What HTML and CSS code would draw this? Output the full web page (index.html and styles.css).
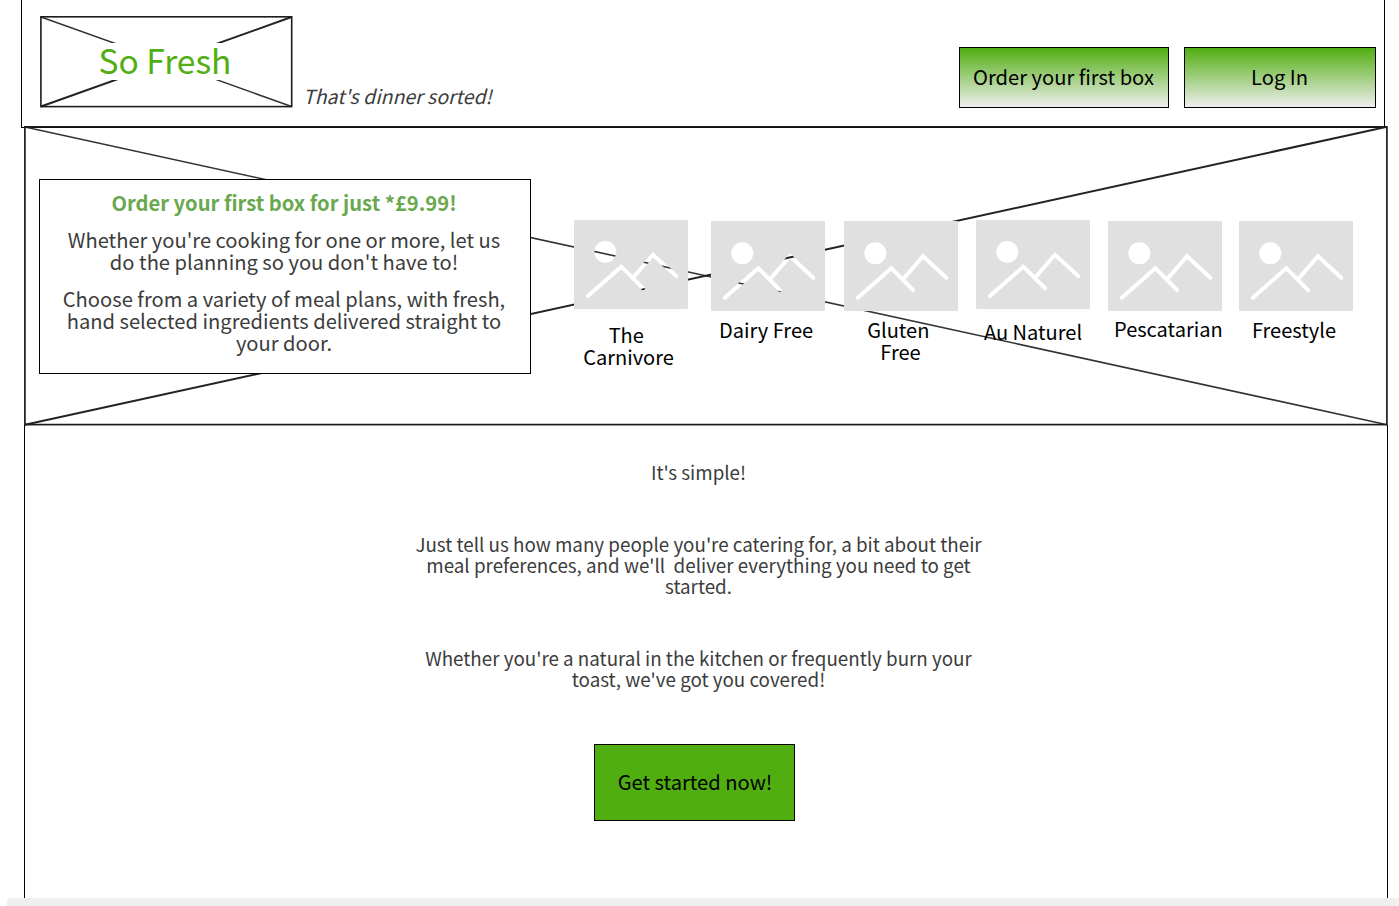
FILE: index.html
```html
<!DOCTYPE html>
<html lang="en">
<head>
<meta charset="utf-8">
<title>So Fresh</title>
<link rel="stylesheet" href="styles.css">
</head>
<body>
<svg class="defs" width="0" height="0" aria-hidden="true">
  <defs>
    <mask id="cutout" maskUnits="userSpaceOnUse" x="0" y="0" width="114" height="91">
      <rect width="114" height="91" rx="2" fill="#fff"/>
      <circle cx="31.3" cy="32.7" r="11" fill="#000"/>
      <path d="M13.8 77.3 47.3 47.7 69 69.5M59.8 57.9 79 35.7l23.3 21.6" fill="none" stroke="#000" stroke-width="4" stroke-linecap="round" stroke-linejoin="miter"/>
    </mask>
    <symbol id="picture" viewBox="0 -.5 114 92" preserveAspectRatio="none">
      <rect width="114" height="91" fill="#e0e0e0" mask="url(#cutout)"/>
    </symbol>
  </defs>
</svg>
<header class="header">
  <div class="logo">
    <svg class="cross" viewBox="0 0 253 92" aria-hidden="true">
      <path d="M1 1 251.5 90.5" stroke="#333" stroke-width="1.5"/>
      <path d="M1 90.5 251.5 1" stroke="#222" stroke-width="1.9"/>
      <rect x=".9" y=".8" width="250.8" height="89.8" fill="none" stroke="#1c1c1c" stroke-width="1.6"/>
    </svg>
    <h1 class="logo-text">So Fresh</h1>
  </div>
  <p class="tagline">That's dinner sorted!</p>
  <nav class="nav">
    <button class="button button-order">Order your first box</button>
    <button class="button button-login">Log In</button>
  </nav>
</header>
<section class="hero">
  <svg class="cross" viewBox="0 0 1364 300" aria-hidden="true">
    <path d="M1 1 1363 298.7" stroke="#333" stroke-width="1.6"/>
    <path d="M1 298.7 1363 .8" stroke="#222" stroke-width="2"/>
    <rect x=".9" y=".8" width="1362" height="297.8" fill="none" stroke="#1c1c1c" stroke-width="1.7"/>
  </svg>
  <div class="promo">
    <h2 class="promo-title">Order your first box for just *£9.99!</h2>
    <p class="promo-text">Whether you're cooking for one or more, let us<br>do the planning so you don't have to!</p>
    <p class="promo-text">Choose from a variety of meal plans, with fresh,<br>hand selected ingredients delivered straight to<br>your door.</p>
  </div>
  <div class="meals">
    <div class="meal carnivore"><svg class="thumb"><use href="#picture"/></svg><p class="label">The&nbsp;<br>Carnivore</p></div>
    <div class="meal dairy"><svg class="thumb"><use href="#picture"/></svg><p class="label">Dairy Free</p></div>
    <div class="meal gluten"><svg class="thumb"><use href="#picture"/></svg><p class="label">Gluten&nbsp;<br>Free</p></div>
    <div class="meal naturel"><svg class="thumb"><use href="#picture"/></svg><p class="label">Au Naturel</p></div>
    <div class="meal pescatarian"><svg class="thumb"><use href="#picture"/></svg><p class="label">Pescatarian</p></div>
    <div class="meal freestyle"><svg class="thumb"><use href="#picture"/></svg><p class="label">Freestyle</p></div>
  </div>
</section>
<main class="intro">
  <p class="copy">It's simple!</p>
  <p class="copy">Just tell us how many people you're catering for, a bit about their<br>meal preferences, and we'll&nbsp; deliver everything you need to get<br>started.</p>
  <p class="copy">Whether you're a natural in the kitchen or frequently burn your<br>toast, we've got you covered!</p>
  <button class="cta">Get started now!</button>
</main>
<footer class="footer"></footer>
</body>
</html>
```

FILE: styles.css
```css
* { box-sizing: border-box; }
html { overflow: hidden; }
body {
  margin: 0;
  width: 1399px;
  height: 906px;
  overflow: hidden;
  background: #fff;
  color: #3c3c3c;
  font-family: "Noto Sans CJK SC", "Noto Sans", sans-serif;
  font-size: 20.15px;
  line-height: 22px;
  white-space: nowrap;
}
h1, h2, p { margin: 0; }
button { font: inherit; color: #000; border: 1px solid #000; padding: 0; }
.defs { position: absolute; }

.header {
  display: flex;
  align-items: flex-start;
  width: 1364px;
  height: 128px;
  margin-left: 21px;
  border: 1px solid #000;
  border-top: 0;
}
.logo {
  position: relative;
  width: 253px;
  height: 92px;
  margin: 16px 0 0 18px;
  padding-top: 27px;
}
.cross { position: absolute; inset: 0; width: 100%; height: 100%; }
.logo-text {
  position: relative;
  width: 148px;
  height: 37px;
  margin-left: 51px;
  background: #fff;
  color: #51ae11;
  font-size: 33.6px;
  font-weight: 400;
  line-height: 34px;
  text-align: center;
}
.tagline { margin: 85px 0 0 10px; font-size: 19.5px; font-style: italic; }
.nav { display: flex; gap: 15px; margin: 47px 8px 0 auto; }
.button { height: 61px; padding-bottom: 2px; background: linear-gradient(#51ae11, #efefef); }
.button-order { width: 210px; padding-right: 1px; }
.button-login { width: 192px; padding-right: 1px; }

.hero {
  position: relative;
  display: flex;
  align-items: flex-start;
  width: 1364px;
  height: 300px;
  margin: -2px 0 0 24px;
}
.promo {
  position: relative;
  display: flex;
  flex-direction: column;
  gap: 15px;
  width: 492px;
  height: 195px;
  margin: 53px 0 0 15px;
  padding: 12px 2px 0 0;
  border: 1px solid #000;
  background: #fff;
  text-align: center;
}
.promo-title { font-size: 20.2px; line-height: inherit; color: #6aa84f; }
.meals { position: relative; display: flex; margin: 93px 0 0 43px; }
.meal { width: 114px; }
.thumb { display: block; width: 114px; height: 92px; }
.label { color: #000; font-size: 20.05px; text-align: center; }
.carnivore .thumb, .naturel .thumb { height: 91px; }
.carnivore .label { margin: 14px 5px 0 0; }
.dairy { margin: 1px 0 0 23px; }
.dairy .label { margin: 7px 4px 0 0; }
.gluten { margin: 1px 0 0 19px; }
.gluten .label { margin: 7px 1px 0 0; }
.naturel { margin-left: 18px; }
.naturel .label { margin-top: 11px; }
.pescatarian { margin: 1px 0 0 18px; }
.pescatarian .label { margin: 6px 0 0 6px; }
.freestyle { margin: 1px 0 0 17px; }
.freestyle .label { margin: 7px 4px 0 0; }

.intro {
  display: flex;
  flex-direction: column;
  align-items: center;
  gap: 51px;
  width: 1364px;
  height: 473px;
  margin: -1px 0 0 24px;
  padding: 36px 15px 0 0;
  border: solid #000;
  border-width: 0 1px;
  font-size: 18.8px;
  line-height: 21px;
  text-align: center;
}
.cta {
  width: 201px;
  height: 77px;
  margin: 4px 8px 0 0;
  padding: 0 0 2px 1px;
  background: #51ae11;
  font-size: 20.15px;
}
.footer { height: 8px; margin-left: 7px; background: #efefef; border-radius: 3px 0 0 0; }
```
